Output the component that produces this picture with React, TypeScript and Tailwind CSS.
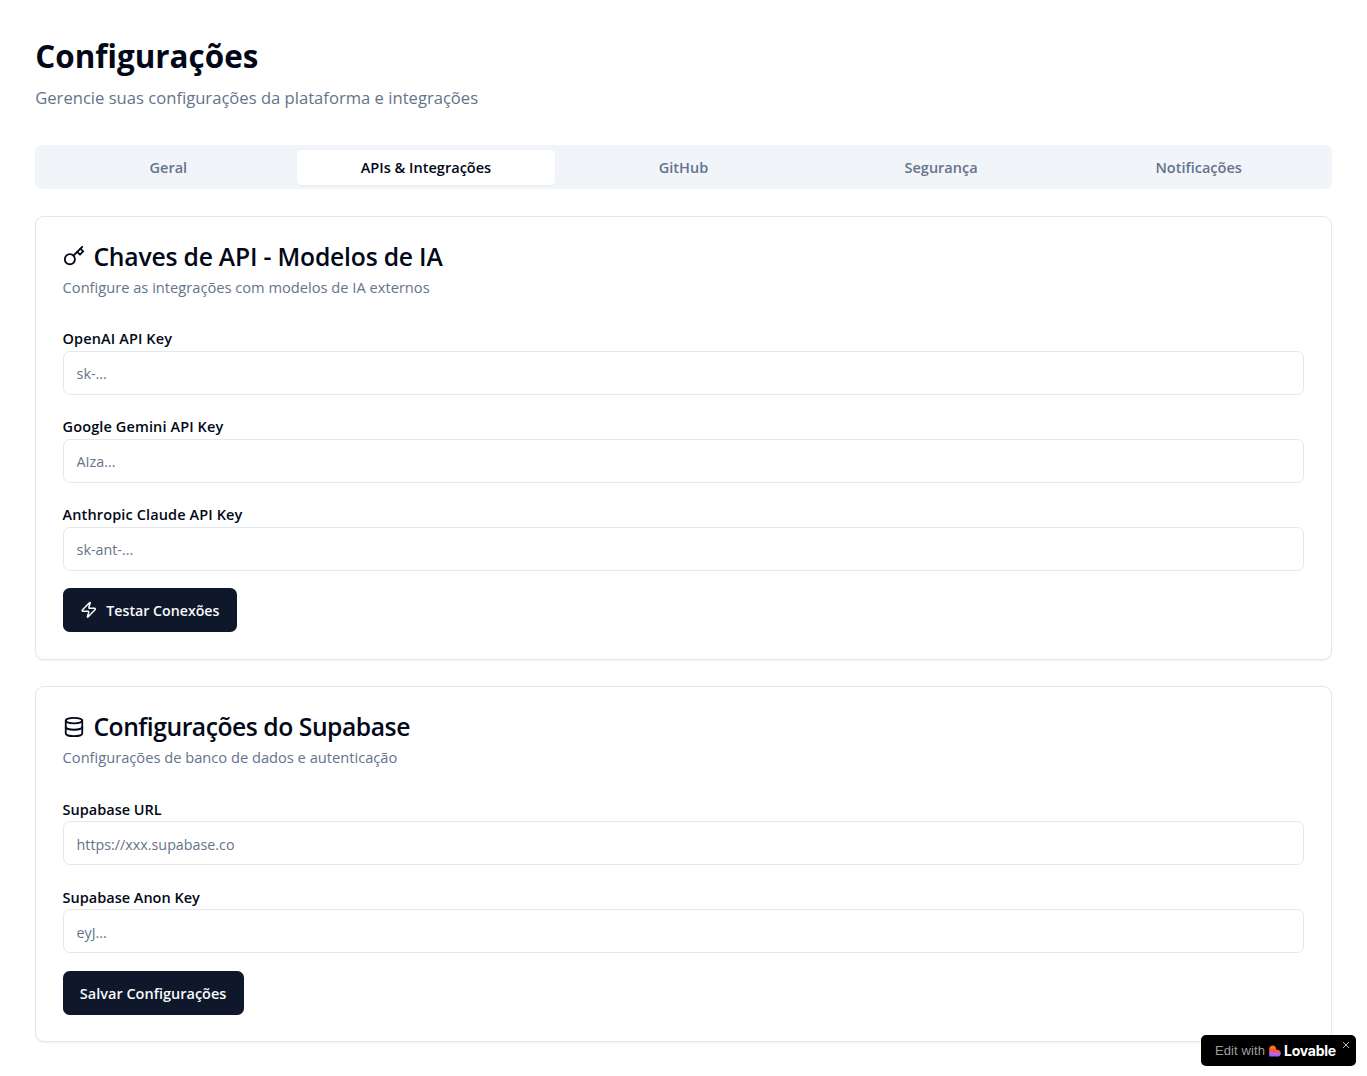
import React from "react";
import { Database, Zap } from "lucide-react";

const tabs = ["Geral", "APIs & Integrações", "GitHub", "Segurança", "Notificações"];

function KeyIcon() {
  return (
    <svg
      viewBox="0 0 24 24"
      fill="none"
      stroke="currentColor"
      strokeWidth="2"
      strokeLinecap="round"
      strokeLinejoin="round"
      className="mb-[2px] size-[22px]"
    >
      <circle cx="7.5" cy="15.5" r="5.5" />
      <path d="m21 2-9.6 9.6" />
      <path d="m15.5 7.5 3 3L22 7l-3-3" />
    </svg>
  );
}

function Field({
  label,
  placeholder,
  labelClass,
  inputClass,
}: {
  label: string;
  placeholder: string;
  labelClass: string;
  inputClass: string;
}) {
  return (
    <label className="flex flex-col">
      <span className={`text-[14.5px] leading-[21px] font-semibold ${labelClass}`}>{label}</span>
      <input
        placeholder={placeholder}
        className={`h-11 w-full rounded-[6.6px] border border-[#e2e8f0] bg-white px-[13px] text-[14.3px] placeholder:text-[#64748b] focus:outline-none ${inputClass}`}
      />
    </label>
  );
}

function Card({
  icon,
  title,
  description,
  className,
  children,
}: {
  icon: React.ReactNode;
  title: React.ReactNode;
  description: string;
  className: string;
  children: React.ReactNode;
}) {
  return (
    <section className={`rounded-[8.8px] border border-[#e2e8f0] bg-white px-[26.4px] shadow-xs ${className}`}>
      <div className="mt-[26px] flex h-7 items-center gap-[8.8px]">
        {icon}
        <h2 className="text-[24.7px] leading-7 font-semibold">{title}</h2>
      </div>
      <p className="mt-[5px] h-[22px] text-[14.66px] leading-[22px] text-[#64748b]">{description}</p>
      <div className="mt-[30px] flex flex-col gap-[21px]">{children}</div>
    </section>
  );
}

function Button({ children, className }: { children: React.ReactNode; className: string }) {
  return (
    <button
      className={`flex h-11 items-center justify-center self-start rounded-[6.6px] bg-[#0f172a] pt-px font-semibold whitespace-nowrap text-[#f8fafc] ${className}`}
    >
      {children}
    </button>
  );
}

function LovableMark() {
  return (
    <svg viewBox="0 0 12 12" className="h-3 w-3">
      <defs>
        <linearGradient id="lovable" x1="4.5" y1="0" x2="3.5" y2="12" gradientUnits="userSpaceOnUse">
          <stop offset="0.2" stopColor="#ff7410" />
          <stop offset="0.5" stopColor="#fb5058" />
          <stop offset="0.72" stopColor="#c963e8" />
          <stop offset="1" stopColor="#4f74ff" />
        </linearGradient>
      </defs>
      <path
        d="M3.7 0.4C5.6 0.4 7.2 1.9 7.2 3.9V4.8H8.4C10.3 4.8 11.8 6.3 11.8 8.2S10.3 11.6 8.4 11.6H0.2V3.9C0.2 1.9 1.8 0.4 3.7 0.4Z"
        fill="url(#lovable)"
      />
    </svg>
  );
}

export default function App() {
  const apiField = { labelClass: "mb-[2px] tracking-[0.12px]", inputClass: "pt-px" };
  const supabaseField = { labelClass: "mt-px mb-px", inputClass: "pt-[3px]" };

  return (
    <div className="min-h-[1076px] bg-white px-[35.2px] pt-9 font-['Open_Sans','Noto_Sans',sans-serif] text-[#020817]">
      <h1 className="h-10 text-[31.4px] leading-10 font-bold">Configurações</h1>
      <p className="mt-[9px] h-[26px] text-[16.62px] leading-[26px] text-[#64748b]">
        Gerencie suas configurações da plataforma e integrações
      </p>

      <div className="mt-[34px] grid h-11 grid-cols-5 rounded-[6.6px] bg-[#f1f5f9] p-[4.4px] pt-[5px]">
        {tabs.map((tab) => (
          <button
            key={tab}
            className={
              tab === "APIs & Integrações"
                ? "rounded-[4.4px] bg-white pt-[2px] text-[14.55px] font-semibold shadow-xs"
                : "rounded-[4.4px] pt-[2px] text-[14.5px] font-semibold text-[#64748b]"
            }
          >
            {tab}
          </button>
        ))}
      </div>

      <Card
        className="mt-[27px] h-[444px]"
        icon={<KeyIcon />}
        title={<span className="tracking-[-0.2px]">Chaves de API - Modelos de IA</span>}
        description="Configure as integrações com modelos de IA externos"
      >
        <Field label="OpenAI API Key" placeholder="sk-..." {...apiField} />
        <Field label="Google Gemini API Key" placeholder="AIza..." {...apiField} />
        <Field label="Anthropic Claude API Key" placeholder="sk-ant-..." {...apiField} />
        <Button className="-mt-1 w-[174px] gap-[9px] text-[14.2px]">
          <Zap className="mb-px size-[17.6px]" />
          Testar Conexões
        </Button>
      </Card>

      <Card
        className="mt-[26px] h-[356px]"
        icon={<Database className="size-[22px]" />}
        title={<span className="tracking-[-0.47px]">Configurações do Supabase</span>}
        description="Configurações de banco de dados e autenticação"
      >
        <Field label="Supabase URL" placeholder="https://xxx.supabase.co" {...supabaseField} />
        <Field label="Supabase Anon Key" placeholder="eyJ..." {...supabaseField} />
        <Button className="-mt-[3px] w-[181px] text-[14.5px]">Salvar Configurações</Button>
      </Card>

      <a className="fixed right-[11px] bottom-[10px] flex h-[31px] w-[155px] items-center rounded-[5px] bg-black pl-[14px] font-['Liberation_Sans',sans-serif]">
        <span className="text-[13px] tracking-[0.1px] text-[#9f9f9f]">Edit with</span>
        <span className="ml-1">
          <LovableMark />
        </span>
        <span className="ml-[3px] font-['Inter',sans-serif] text-[14px] font-bold tracking-[-0.25px] text-white">Lovable</span>
        <span className="absolute top-[6px] right-[6px]">
          <svg viewBox="0 0 8 8" className="size-2" stroke="#b5b5b5" strokeWidth="1">
            <path d="M1 1L7 7M7 1L1 7" />
          </svg>
        </span>
      </a>
    </div>
  );
}
